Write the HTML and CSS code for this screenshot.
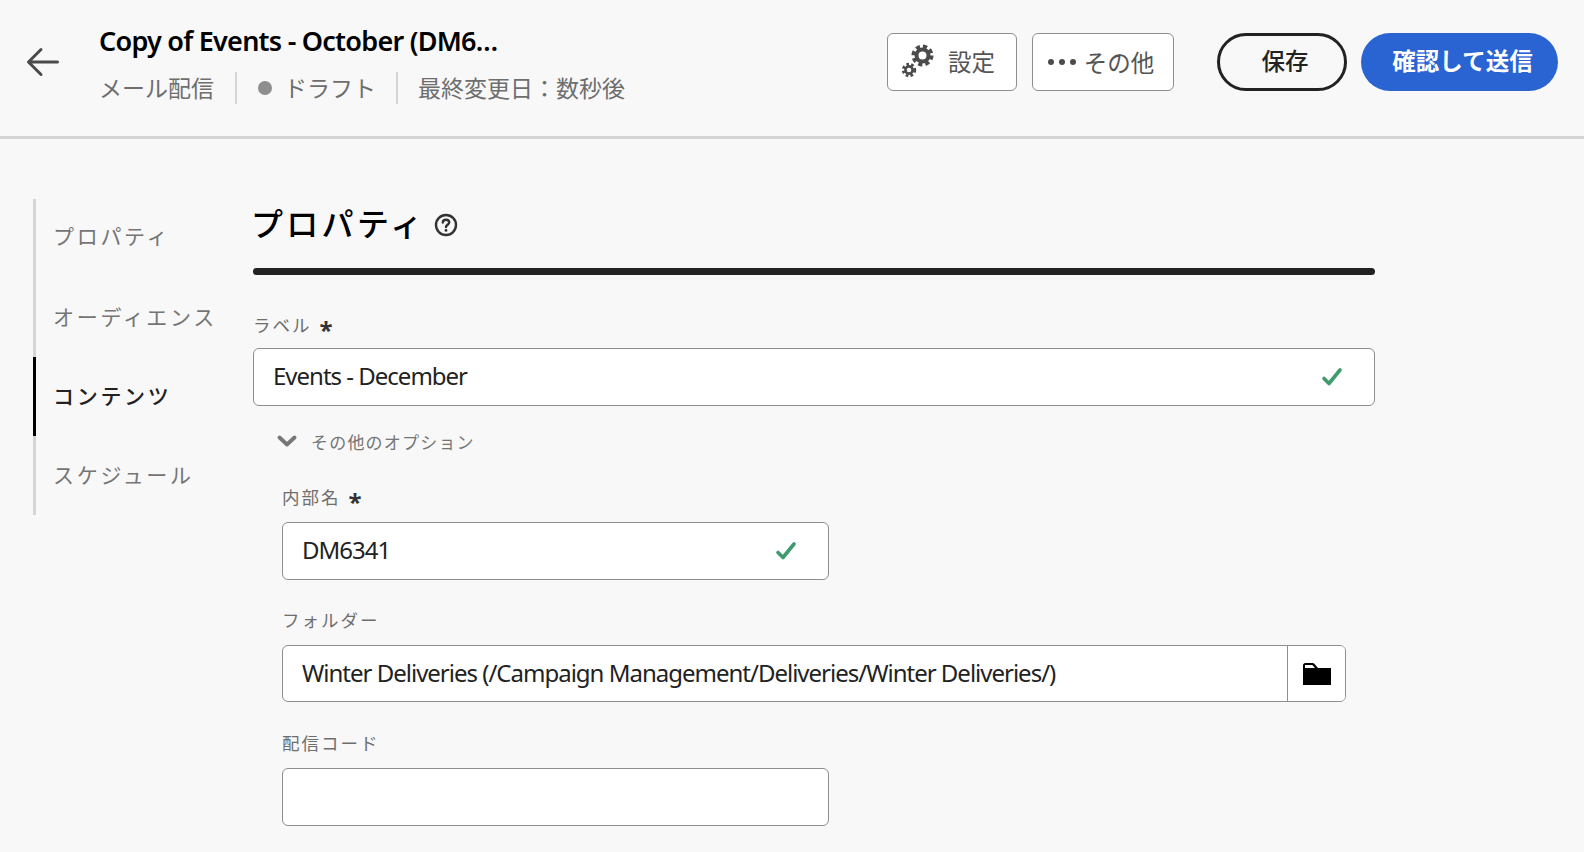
FILE: index.html
```html
<!DOCTYPE html>
<html lang="ja">
	<head>
		<meta charset="UTF-8" />
		<title>プロパティ</title>
		<link rel="stylesheet" href="styles.css">
	</head>
	<body>
		<header class="topbar">
			<button class="back" aria-label="戻る">
				<svg width="34" height="30" viewBox="0 0 34 30" fill="none" stroke="#4b4b4b" stroke-width="3" stroke-linecap="round" stroke-linejoin="round">
					<path d="M2.5 15H31.5M15 2.5L2.5 15L15 27.5" />
				</svg>
			</button>
			<div class="title-block">
				<h1>Copy of Events - October (DM6…</h1>
				<div class="meta">
					<span>メール配信</span>
					<span class="meta-status"><i class="dot"></i>ドラフト</span>
					<span>最終変更日：数秒後</span>
				</div>
			</div>
			<div class="actions">
				<button class="btn-quiet btn-settings">
					<svg width="34" height="34" viewBox="0 0 34 34" fill="none" stroke="#4b4b4b">
						<circle cx="21.5" cy="11.5" r="6" stroke-width="4" />
						<circle cx="21.5" cy="11.5" r="9" stroke-width="4" stroke-dasharray="4.1 3" />
						<circle cx="8" cy="26" r="3.6" stroke-width="2.6" />
						<circle cx="8" cy="26" r="5.8" stroke-width="2.8" stroke-dasharray="2.6 2.2" />
					</svg>
					<span>設定</span>
				</button>
				<button class="btn-quiet btn-more">
					<svg width="30" height="8" viewBox="0 0 30 8" fill="#4b4b4b">
						<circle cx="4" cy="4" r="3" /><circle cx="15" cy="4" r="3" /><circle cx="26" cy="4" r="3" />
					</svg>
					<span>その他</span>
				</button>
				<button class="btn-save">保存</button>
				<button class="btn-send">確認して送信</button>
			</div>
		</header>

		<div class="page">
			<nav class="side-nav">
				<a href="#">プロパティ</a>
				<a href="#">オーディエンス</a>
				<a href="#" class="active">コンテンツ</a>
				<a href="#">スケジュール</a>
			</nav>

			<main class="content">
				<div class="heading">
					<h2>プロパティ</h2>
					<svg width="24" height="24" viewBox="0 0 24 24" fill="none" stroke="#333" stroke-width="2.4">
						<circle cx="12" cy="12" r="10" />
						<path d="M8.8 9.6C8.8 7.8 10.2 6.8 12 6.8S15.2 7.9 15.2 9.5C15.2 11.6 12 11.8 12 14" stroke-linecap="round" />
						<circle cx="12" cy="17.4" r="1.4" fill="#333" stroke="none" />
					</svg>
				</div>
				<div class="rule"></div>

				<div class="field field-label">
					<label>ラベル<span class="req">*</span></label>
					<div class="input">
						<span>Events - December</span>
						<svg class="check" width="22" height="20" viewBox="0 0 22 20" fill="none" stroke="#3f9b6c" stroke-width="3.6" stroke-linecap="round" stroke-linejoin="round">
							<path d="M3 11.5L8 16.5L19 3" />
						</svg>
					</div>
				</div>

				<div class="more-options">
					<svg width="20" height="12" viewBox="0 0 20 12" fill="none" stroke="#777" stroke-width="3.8" stroke-linecap="round" stroke-linejoin="round">
						<path d="M2.5 2.5L10 9.5L17.5 2.5" />
					</svg>
					<span>その他のオプション</span>
				</div>

				<div class="options">
					<div class="field narrow field-name">
						<label>内部名<span class="req">*</span></label>
						<div class="input">
							<span>DM6341</span>
							<svg class="check" width="22" height="20" viewBox="0 0 22 20" fill="none" stroke="#3f9b6c" stroke-width="3.6" stroke-linecap="round" stroke-linejoin="round">
								<path d="M3 11.5L8 16.5L19 3" />
							</svg>
						</div>
					</div>

					<div class="field">
						<label>フォルダー</label>
						<div class="input input-picker">
							<span class="picker-value">Winter Deliveries (/Campaign Management/Deliveries/Winter Deliveries/)</span>
							<button class="picker-btn" aria-label="フォルダーを選択">
								<svg width="30" height="24" viewBox="0 0 30 24" fill="#000">
									<path d="M1 3.5C1 2.1 2 1 3.4 1H10.5C11.3 1 12 1.3 12.5 1.9L16 6H29V23H1Z" />
									<path d="M3 3H10.4L13 6H3Z" fill="#fff" />
								</svg>
							</button>
						</div>
					</div>

					<div class="field narrow field-code">
						<label>配信コード</label>
						<div class="input"></div>
					</div>
				</div>
			</main>
		</div>
	</body>
</html>
```

FILE: styles.css
```css
* {
	box-sizing: border-box;
	margin: 0;
	padding: 0;
}

html,
body {
	height: 100%;
	overflow: hidden;
}

body {
	font-family: "Noto Sans", "Noto Sans CJK JP", sans-serif;
	background-color: #f8f8f8;
	color: #222;
}

button {
	font-family: inherit;
	cursor: pointer;
}

.topbar {
	display: flex;
	align-items: center;
	height: 139px;
	padding: 0 26px 13px 26px;
	border-bottom: 3px solid #d5d5d5;
}

.back {
	display: flex;
	background: none;
	border: none;
	margin-right: 39px;
}

.title-block {
	display: flex;
	flex-direction: column;
	gap: 13px;
	margin-top: 4px;
}

h1 {
	font-size: 27px;
	line-height: 36px;
	font-weight: 600;
	color: #000;
	letter-spacing: -0.75px;
}

.meta {
	display: flex;
	align-items: center;
	font-size: 23px;
	line-height: 32px;
	color: #6e6e6e;
}

.meta span + span {
	border-left: 2px solid #d5d5d5;
	margin-left: 21px;
	padding-left: 21px;
}

.meta .meta-status + span {
	margin-left: 20px;
	padding-left: 20px;
}

.meta-status {
	display: flex;
	align-items: center;
}

.dot {
	width: 14px;
	height: 14px;
	border-radius: 50%;
	background-color: #8e8e8e;
	margin-right: 12px;
}

.actions {
	display: flex;
	margin-left: auto;
}

.actions button {
	height: 58px;
	font-size: 23.5px;
}

.btn-quiet {
	display: flex;
	align-items: center;
	justify-content: center;
	background-color: #fff;
	border: 1px solid #8e8e8e;
	border-radius: 6px;
	color: #555;
}

.btn-settings {
	width: 130px;
	gap: 13px;
	padding: 0 8px 1px 0;
}

.btn-more {
	width: 142px;
	margin-left: 15px;
	gap: 7px;
	padding-right: 5px;
}

.btn-save {
	width: 130px;
	margin-left: 43px;
	padding: 0 0 4px 6px;
	background: none;
	border: 3px solid #222;
	border-radius: 29px;
	color: #222;
	font-weight: 500;
}

.btn-send {
	width: 197px;
	margin-left: 14px;
	padding: 0 0 4px 6px;
	background-color: #2a64d3;
	border: none;
	border-radius: 29px;
	color: #fff;
	font-weight: 700;
}

.page {
	display: flex;
	align-items: flex-start;
	padding: 60px 0 0 33px;
}

.side-nav {
	display: flex;
	flex-direction: column;
	width: 220px;
	border-left: 3px solid #d5d5d5;
}

.side-nav a {
	display: flex;
	align-items: center;
	height: 79px;
	margin-left: -3px;
	padding: 0 0 3px 17px;
	border-left: 3px solid transparent;
	font-size: 21px;
	letter-spacing: 2.7px;
	color: #757575;
	text-decoration: none;
}

.side-nav a:first-child {
	padding-bottom: 8px;
}

.side-nav a.active {
	border-left-color: #000;
	color: #222;
	font-weight: 500;
}

.content {
	width: 1122px;
}

.heading {
	display: flex;
	align-items: center;
	gap: 8px;
	height: 52px;
	margin-bottom: 17px;
}

h2 {
	font-size: 32px;
	line-height: 52px;
	font-weight: 500;
	color: #000;
	letter-spacing: 3.3px;
	margin: -2px 0 0 -2px;
}

.rule {
	height: 7px;
	border-radius: 4px;
	background-color: #222;
}

.field label {
	display: block;
	font-size: 17.5px;
	line-height: 24px;
	letter-spacing: 2px;
	color: #6e6e6e;
	margin-bottom: 13px;
}

.req {
	margin-left: 8px;
	color: #333;
	font-size: 24px;
	font-weight: 700;
	line-height: 20px;
	vertical-align: -7px;
}

.field-label {
	margin-top: 38px;
}

.field-label label {
	margin-bottom: 8px;
}

.field-name label {
	margin-bottom: 10px;
}

.field-code {
	margin-top: 1px;
}

.input {
	display: flex;
	align-items: center;
	justify-content: space-between;
	height: 58px;
	padding: 0 31px 3px 19px;
	background-color: #fff;
	border: 1px solid #8e8e8e;
	border-radius: 6px;
	font-size: 24px;
	letter-spacing: -1px;
	color: #222;
}

.check {
	margin-top: 2px;
}

.more-options {
	display: flex;
	align-items: center;
	gap: 14px;
	margin: 22px 0 0 24px;
	height: 26px;
	font-size: 17px;
	letter-spacing: 1.2px;
	color: #757575;
}

.options {
	display: flex;
	flex-direction: column;
	gap: 28px;
	width: 1064px;
	margin: 31px 0 0 29px;
}

.narrow {
	width: 547px;
}

.input-picker {
	height: 57px;
	padding: 0 0 0 19px;
	overflow: hidden;
}

.picker-value {
	padding-bottom: 3px;
}

.picker-btn {
	display: flex;
	align-items: center;
	justify-content: center;
	width: 58px;
	height: 100%;
	background-color: #fff;
	border: none;
	border-left: 1px solid #8e8e8e;
}
```
